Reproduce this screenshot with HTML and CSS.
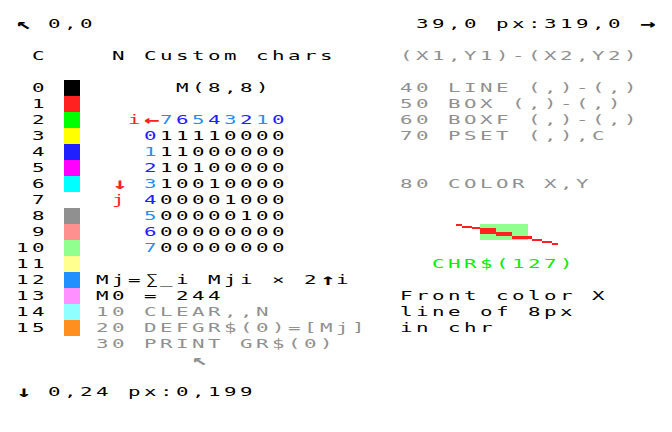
FILE: index.html
```html
<!DOCTYPE html>
<html>
<head>
<meta charset="utf-8">
<title>Custom chars</title>
<link rel="stylesheet" href="styles.css">
</head>
<body>
<div class="screen">
<div class="row"><span class="g">↖</span> 0,0                    39,0 px:319,0 <span class="g">→</span></div>
<div class="row"></div>
<div class="row"> C    N Custom chars    <span class="gray">(X1,Y1)-(X2,Y2)</span></div>
<div class="row"></div>
<div class="row"> 0 <span class="sw c0"></span>      M(8,8)        <span class="gray">40 LINE (,)-(,)</span></div>
<div class="row"> 1 <span class="sw c1"></span>                    <span class="gray">50 BOX (,)-(,)</span></div>
<div class="row"> 2 <span class="sw c2"></span>   <span class="red">i</span><span class="g red">←</span><span class="lblue">7</span><span class="blue">6</span><span class="lblue">5</span><span class="blue">4</span><span class="lblue">3</span><span class="blue">2</span><span class="lblue">1</span><span class="blue">0</span>       <span class="gray">60 BOXF (,)-(,)</span></div>
<div class="row"> 3 <span class="sw c3"></span>    <span class="blue">0</span>11110000       <span class="gray">70 PSET (,),C</span></div>
<div class="row"> 4 <span class="sw c4"></span>    <span class="lblue">1</span>11000000</div>
<div class="row"> 5 <span class="sw c5"></span>    <span class="blue">2</span>10100000</div>
<div class="row"> 6 <span class="sw c6"></span>  <span class="g red">↓</span> <span class="lblue">3</span>10010000       <span class="gray">80 COLOR X,Y</span></div>
<div class="row"> 7 <span class="sw c7"></span>  <span class="red">j</span> <span class="blue">4</span>00001000</div>
<div class="row"> 8 <span class="sw c8"></span>    <span class="lblue">5</span>00000100</div>
<div class="row"> 9 <span class="sw c9"></span>    <span class="blue">6</span>00000000</div>
<div class="row">10 <span class="sw c10"></span>    <span class="lblue">7</span>00000000</div>
<div class="row">11 <span class="sw c11"></span>                      <span class="green">CHR$(127)</span></div>
<div class="row">12 <span class="sw c12"></span> Mj=<span class="cell">∑</span>_i Mji × 2<span class="g">↑</span>i</div>
<div class="row">13 <span class="sw c13"></span> M0 = 244           Front color X</div>
<div class="row">14 <span class="sw c14"></span> <span class="gray">10 CLEAR,,N</span>        line of 8px</div>
<div class="row">15 <span class="sw c15"></span> <span class="gray">20 DEFGR$(0)=[Mj]</span>  in chr</div>
<div class="row">     <span class="gray">30 PRINT GR$(0)</span></div>
<div class="row">           <span class="g gray">↖</span></div>
<div class="row"></div>
<div class="row"><span class="g">↓</span> 0,24 px:0,199</div>
<svg class="diagram" viewBox="0 0 104 22" preserveAspectRatio="none">
<rect x="24" y="0" width="48" height="16" fill="#90ff90"/>
<g fill="#ff2020">
<rect x="0" y="0" width="6" height="2"/>
<rect x="6" y="2" width="10" height="2"/>
<rect x="16" y="3" width="8" height="2"/>
<rect x="24" y="4" width="16" height="6"/>
<rect x="40" y="8" width="16" height="4"/>
<rect x="56" y="12" width="20" height="3"/>
<rect x="76" y="15" width="10" height="2"/>
<rect x="86" y="17" width="10" height="2"/>
<rect x="96" y="19" width="6" height="2"/>
</g>
</svg>
</div>
</body>
</html>
```
FILE: styles.css
```css
body {
  margin: 0;
  background: #ffffff;
}

.screen {
  position: relative;
  width: 400px;
  margin: 16px 0 0 16px;
  transform: scaleX(1.6);
  transform-origin: 0 0;
  font-family: "DejaVu Sans Mono", monospace;
  font-size: 13px;
  line-height: 16px;
  letter-spacing: 2.1733px;
  color: #000000;
}

.row {
  height: 16px;
  white-space: pre;
}

.cell {
  display: inline-flex;
  justify-content: center;
  width: 10px;
  height: 16px;
  letter-spacing: 0;
  vertical-align: top;
}

.g {
  display: inline-flex;
  justify-content: center;
  width: 10px;
  height: 16px;
  font-size: 16px;
  line-height: 16px;
  font-weight: bold;
  letter-spacing: 0;
  vertical-align: top;
}

.sw {
  display: inline-block;
  width: 10px;
  height: 16px;
  vertical-align: top;
}

.c0 { background: #000000; }
.c1 { background: #ff2020; }
.c2 { background: #00ff00; }
.c3 { background: #ffff00; }
.c4 { background: #2020ff; }
.c5 { background: #ff00ff; }
.c6 { background: #00ffff; }
.c7 { background: #ffffff; }
.c8 { background: #909090; }
.c9 { background: #ff9090; }
.c10 { background: #90ff90; }
.c11 { background: #ffff90; }
.c12 { background: #2090ff; }
.c13 { background: #ff90ff; }
.c14 { background: #90ffff; }
.c15 { background: #ff9020; }

.red { color: #ff2020; }
.blue { color: #2020ff; }
.lblue { color: #2090ff; }
.gray { color: #909090; }
.green { color: #00ee00; }

.diagram {
  position: absolute;
  left: 275px;
  top: 208px;
  width: 65px;
  height: 22px;
}
```
